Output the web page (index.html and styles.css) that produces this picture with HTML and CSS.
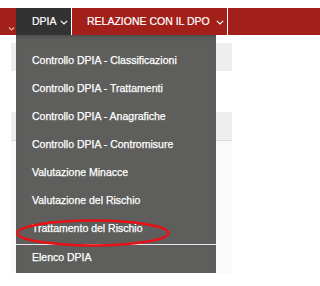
FILE: index.html
```html
<!DOCTYPE html>
<html lang="it">
<head>
<meta charset="utf-8">
<title>Menu DPIA</title>
<link rel="stylesheet" href="styles.css">
</head>
<body>
<nav class="topbar">
  <div class="nav-item nav-prev">
    <svg class="chev-prev" width="16" height="27" viewBox="0 0 16 27"><polyline points="9,19.5 11.5,22 14,19.5" fill="none" stroke="#d9b3b0" stroke-width="1.2"/></svg>
  </div>
  <div class="nav-item nav-dpia">
    <span class="nav-label">DPIA</span>
    <svg class="chev" width="8" height="5" viewBox="0 0 8 5"><polyline points="0.8,0.8 4,4 7.2,0.8" fill="none" stroke="#fff" stroke-width="1.2"/></svg>
    <div class="dropdown">
      <a class="dd-item">Controllo DPIA - Classificazioni</a>
      <a class="dd-item">Controllo DPIA - Trattamenti</a>
      <a class="dd-item">Controllo DPIA - Anagrafiche</a>
      <a class="dd-item">Controllo DPIA - Contromisure</a>
      <a class="dd-item">Valutazione Minacce</a>
      <a class="dd-item">Valutazione del Rischio</a>
      <a class="dd-item">Trattamento del Rischio</a>
      <a class="dd-item dd-sep">Elenco DPIA</a>
      <svg class="highlight" width="154" height="28" viewBox="0 0 154 28"><ellipse cx="77" cy="14" rx="75.5" ry="12.5" fill="none" stroke="#ea1016" stroke-width="2.6"/></svg>
    </div>
  </div>
  <div class="nav-item nav-rel">
    <span class="nav-label">RELAZIONE CON IL DPO</span>
    <svg class="chev" width="8" height="5" viewBox="0 0 8 5"><polyline points="0.8,0.8 4,4 7.2,0.8" fill="none" stroke="#fff" stroke-width="1.2"/></svg>
  </div>
  <div class="nav-item nav-next"></div>
</nav>
<main class="page">
  <div class="row shade"></div>
  <div class="row"></div>
  <div class="row shade ruled"></div>
  <div class="row faint"></div>
</main>
</body>
</html>
```
FILE: styles.css
```css
html, body {
  margin: 0;
  padding: 0;
  background: #ffffff;
  font-family: "Liberation Sans", Arial, sans-serif;
}

.topbar {
  display: flex;
  margin-top: 8px;
  height: 27px;
  background: #a3201a;
}

.nav-item {
  display: flex;
  align-items: center;
  height: 27px;
  color: #ffffff;
  font-size: 10.5px;
  line-height: 27px;
  box-sizing: border-box;
  -webkit-text-stroke: 0.2px #ffffff;
}

.nav-prev {
  width: 16px;
  background: #a3201a;
}

.chev-prev {
  display: block;
}

.nav-dpia {
  position: relative;
  width: 55px;
  padding-left: 16px;
  background: #323232;
}

.nav-rel {
  width: 156px;
  padding-left: 15px;
  border-left: 1px solid #ffffff;
  background: #a3201a;
}

.nav-next {
  flex: 1;
  border-left: 1px solid #ffffff;
  background: #a3201a;
}

.nav-label {
  white-space: nowrap;
}

.chev {
  display: block;
  margin-left: 3px;
  margin-top: 1px;
}

.nav-rel .chev {
  margin-left: 6px;
}

.dropdown {
  position: absolute;
  top: 27px;
  left: 0;
  width: 200px;
  height: 238px;
  padding-top: 13px;
  box-sizing: border-box;
  background: #5e5e5c;
  box-shadow: inset 0 4px 4px -3px rgba(0, 0, 0, 0.25);
  z-index: 5;
}

.dd-item {
  display: block;
  height: 28px;
  padding-left: 16px;
  font-size: 10.5px;
  line-height: 25px;
  color: #ffffff;
  white-space: nowrap;
  -webkit-text-stroke: 0.25px #ffffff;
}

.dd-sep {
  border-top: 1px solid #e8e8e8;
}

.highlight {
  position: absolute;
  left: 0;
  top: 184px;
}

.page {
  display: flex;
  flex-direction: column;
  width: 221px;
  margin: 8px 0 0 11px;
}

.row {
  height: 41px;
  background: #ffffff;
}

.row.shade {
  height: 28px;
  background: #eeeeee;
}

.row.ruled {
  border-bottom: 1px solid #dadada;
}

.row.faint {
  height: 132px;
  background: #fafafa;
}
```
